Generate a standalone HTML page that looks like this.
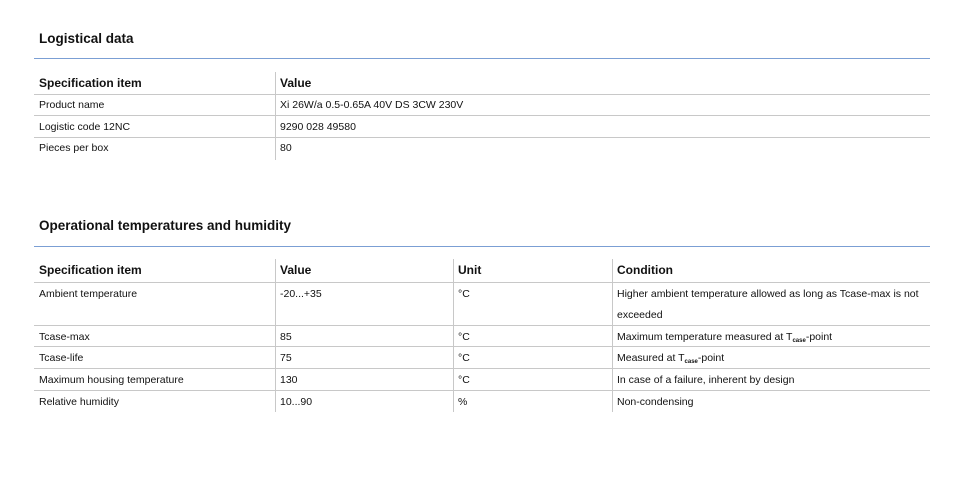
<!DOCTYPE html>
<html><head><style>
body{margin:0;width:960px;height:481px;background:#fff;font-family:"Liberation Sans",sans-serif;color:#111;position:relative;overflow:hidden}
h2{position:absolute;margin:0;font-size:13.5px;font-weight:bold;left:39px}
.hl{position:absolute;left:34px;width:896px;height:1px;background:#7b9fd4}
.rl{position:absolute;left:34px;width:896px;height:1px;background:#c8c8c8}
.vl{position:absolute;width:1px;background:#c8c8c8}
.t{position:absolute;font-size:10.5px;white-space:nowrap;margin-top:1px}
.b{font-weight:bold;font-size:12px;margin-top:0}
sub{font-size:6px;font-weight:bold;vertical-align:-2px}
</style></head><body>
<h2 style="top:31px">Logistical data</h2>
<div class="hl" style="top:58px"></div>
<div class="vl" style="left:275px;top:72px;height:88px"></div>
<div class="t b" style="left:39px;top:76px">Specification item</div>
<div class="t b" style="left:280px;top:76px">Value</div>
<div class="rl" style="top:94px"></div>
<div class="t" style="left:39px;top:98px">Product name</div>
<div class="t" style="left:280px;top:98px">Xi 26W/a 0.5-0.65A 40V DS 3CW 230V</div>
<div class="rl" style="top:115px"></div>
<div class="t" style="left:39px;top:120px">Logistic code 12NC</div>
<div class="t" style="left:280px;top:120px">9290 028 49580</div>
<div class="rl" style="top:137px"></div>
<div class="t" style="left:39px;top:141px">Pieces per box</div>
<div class="t" style="left:280px;top:141px">80</div>

<h2 style="top:218px">Operational temperatures and humidity</h2>
<div class="hl" style="top:246px"></div>
<div class="vl" style="left:275px;top:259px;height:153px"></div>
<div class="vl" style="left:453px;top:259px;height:153px"></div>
<div class="vl" style="left:612px;top:259px;height:153px"></div>
<div class="t b" style="left:39px;top:263px">Specification item</div>
<div class="t b" style="left:280px;top:263px">Value</div>
<div class="t b" style="left:458px;top:263px">Unit</div>
<div class="t b" style="left:617px;top:263px">Condition</div>
<div class="rl" style="top:282px"></div>
<div class="t" style="left:39px;top:287px">Ambient temperature</div>
<div class="t" style="left:280px;top:287px">-20...+35</div>
<div class="t" style="left:458px;top:287px">°C</div>
<div class="t" style="left:617px;top:287px">Higher ambient temperature allowed as long as Tcase-max is not</div>
<div class="t" style="left:617px;top:308px">exceeded</div>
<div class="rl" style="top:325px"></div>
<div class="t" style="left:39px;top:330px">Tcase-max</div>
<div class="t" style="left:280px;top:330px">85</div>
<div class="t" style="left:458px;top:330px">°C</div>
<div class="t" style="left:617px;top:330px">Maximum temperature measured at T<sub>case</sub>-point</div>
<div class="rl" style="top:346px"></div>
<div class="t" style="left:39px;top:351px">Tcase-life</div>
<div class="t" style="left:280px;top:351px">75</div>
<div class="t" style="left:458px;top:351px">°C</div>
<div class="t" style="left:617px;top:351px">Measured at T<sub>case</sub>-point</div>
<div class="rl" style="top:368px"></div>
<div class="t" style="left:39px;top:373px">Maximum housing temperature</div>
<div class="t" style="left:280px;top:373px">130</div>
<div class="t" style="left:458px;top:373px">°C</div>
<div class="t" style="left:617px;top:373px">In case of a failure, inherent by design</div>
<div class="rl" style="top:390px"></div>
<div class="t" style="left:39px;top:395px">Relative humidity</div>
<div class="t" style="left:280px;top:395px">10...90</div>
<div class="t" style="left:458px;top:395px">%</div>
<div class="t" style="left:617px;top:395px">Non-condensing</div>
</body></html>
